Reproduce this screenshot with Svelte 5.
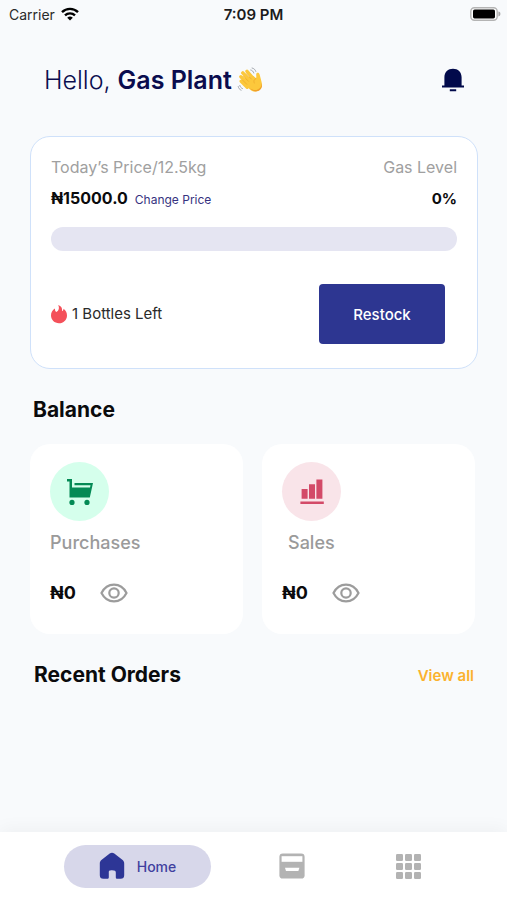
<script>
  const balances = [
    { kind: 'purchases', label: 'Purchases', amount: '₦0' },
    { kind: 'sales', label: 'Sales', amount: '₦0' }
  ];
  const gridSteps = [0, 9, 18];
  const gasLevel = 0;
</script>

<div class="screen">
  <div class="status">
    <div class="carrier">
      <span>Carrier</span>
      <svg width="18" height="14" viewBox="0 0 18 14" aria-hidden="true">
        <g fill="none" stroke="#000" stroke-width="2.4">
          <path d="M1 5.2a11.4 11.4 0 0 1 16 0" />
          <path d="M4 8.4a7.2 7.2 0 0 1 10 0" />
        </g>
        <path d="M9 13.6 6.2 10.8a4 4 0 0 1 5.6 0z" />
      </svg>
    </div>
    <span class="time">7:09 PM</span>
    <svg class="battery" width="31" height="14" viewBox="0 0 31 14" aria-hidden="true">
      <rect x=".8" y=".8" width="26.4" height="12.4" rx="3.6" fill="#fff" stroke="#b4b4b4" stroke-width="1.4" />
      <rect x="3" y="2.6" width="22" height="8.8" rx="1.6" />
      <path d="M28.4 4.6c1.4.3 2 1.2 2 2.4s-.6 2.1-2 2.4z" fill="#a8a8a8" />
    </svg>
  </div>

  <main>
    <header>
      <h1>
        <span>Hello, <b>Gas Plant</b></span>
        <svg width="26" height="26" viewBox="0 0 26 26" role="img" aria-label="Waving hand">
          <g fill="none" stroke="#fcc83c" stroke-width="3.4" stroke-linecap="round">
            <path d="m4.200 14.200 6 6M3.900 9.700l8 8M5.800 5.900l8 8.600M10 4.400l7 8" />
          </g>
          <path
            d="m8.500 10.500 8-1.500 2.600 2.300c.5-1.500 0-2.800.1-4.100.1-1.200 1-1.700 1.900-1.400 1 .3 1.500 1.300 1.800 2.600l1.600 6.400c.9 3.500.2 6.400-2.300 8.200-3 2.200-6.700 2-9.500-.8l-5-4.600z"
            fill="#fcc83c"
          />
          <path
            d="m5.600 13.100 4.200 4.200M6.500 9.300l5 5M9.300 6.700l5 5.300M18.900 11.400c-1.900 1-2.500 2.700-1.700 4.700"
            fill="none" stroke="#eba62a" stroke-width=".7" stroke-linecap="round"
          />
          <path d="M24.400 15.500c.6 3.600-1.400 6.600-4.900 7.400-2.200.5-4.400-.1-6.300-1.600 2.700 3.800 7.300 3.900 10 1.400 2-1.900 2.200-4.400 1.200-7.200z" fill="#f0a02a" />
          <path
            d="M13.700 3c1.500.3 2.700 1.500 3.100 3M15.100 1c1.900.4 3.200 1.700 3.700 3.400M2.800 18.400c.3 1.500 1.200 2.600 2.700 3.200M1.200 19.500c.3 1.800 1.300 3 2.900 3.700"
            fill="none" stroke="#9a9ea6" stroke-width=".9" stroke-linecap="round"
          />
        </svg>
      </h1>
      <button class="plain" aria-label="Notifications">
        <svg width="24" height="24" viewBox="0 0 24 24" fill="#020a4b" aria-hidden="true">
          <path d="M3.400 17.400V9.200C3.400 4.300 7 .8 12 .8s8.600 3.500 8.600 8.400v8.200H23v2H1v-2zM8.800 21.200h6.400v2H8.800z" />
        </svg>
      </button>
    </header>

    <section class="gas" aria-label="Gas stock">
      <div class="row muted"><span>Today’s Price/12.5kg</span><span>Gas Level</span></div>
      <div class="row values">
        <div class="price"><b>₦15000.0</b><a href="#price">Change Price</a></div>
        <b class="level">{gasLevel}%</b>
      </div>
      <div class="track" role="progressbar" aria-label="Gas level" aria-valuenow={gasLevel} aria-valuemin="0" aria-valuemax="100">
        <div class="fill" style="width: {gasLevel}%"></div>
      </div>
      <div class="row stock">
        <div class="bottles">
          <svg width="16" height="20" viewBox="0 0 16 20" aria-hidden="true">
            <path d="M7.200 1c3 .9 4.300 3 3.800 6.200 1-.4 1.500-1.200 1.600-2.400C14.900 6.700 16 9 16 11.400c0 4.500-3.500 7.800-8 7.800s-8-3.300-8-7.700c0-3 1.400-5.300 4-6.900-.1 1.800.3 2.900 1.400 3.500C8 6.500 8.600 3.700 7.200 1z" fill="#f4505a" />
          </svg>
          <span>1 Bottles Left</span>
        </div>
        <button class="restock">Restock</button>
      </div>
    </section>

    <h2>Balance</h2>
    <div class="balances">
      {#each balances as item}
        <article class={item.kind}>
          <div class="badge">
            {#if item.kind === 'purchases'}
              <svg width="26" height="26" viewBox="0 0 26 26" fill="#048a55" aria-hidden="true">
                <path d="M0 0h5v8.600h18l.5-2.400H7.500V4H26l-3.200 14.400H2.500V2.400H0z" />
                <circle cx="5" cy="23.400" r="2.600" />
                <circle cx="20" cy="23.400" r="2.600" />
              </svg>
            {:else}
              <svg width="24" height="26" viewBox="0 0 24 26" fill="#d34a68" aria-hidden="true">
                <path d="M1.600 10h6v9.800h-6zM9 5.200h6v14.600H9zM16.400.4h6v19.400h-6zM.4 22.400h23.400V25H.4z" />
              </svg>
            {/if}
          </div>
          <h3>{item.label}</h3>
          <div class="amount">
            <b>{item.amount}</b>
            <button class="plain" aria-label="Show {item.label}">
              <svg width="28" height="20" viewBox="0 0 28 20" fill="none" stroke="#9c9c9c" stroke-width="2.2" aria-hidden="true">
                <path d="M1.500 10C4.200 4.600 8.500 1.600 14 1.600S23.800 4.600 26.500 10C23.800 15.400 19.500 18.400 14 18.400S4.200 15.400 1.500 10z" />
                <circle cx="14" cy="10" r="4.700" />
              </svg>
            </button>
          </div>
        </article>
      {/each}
    </div>

    <div class="row orders">
      <h2>Recent Orders</h2>
      <a href="#orders">View all</a>
    </div>
  </main>

  <nav aria-label="Main">
    <a class="home" href="#home" aria-current="page">
      <svg width="26" height="28" viewBox="0 0 26 28" aria-hidden="true">
        <path d="M10.700 1.600c1.500-1.200 3.100-1.200 4.600 0l8 6.200c1.300 1 1.900 2.100 1.900 3.700v11.700c0 2.400-1.200 3.600-3.600 3.600h-3.200c-1 0-1.600-.6-1.600-1.600v-4.700c0-1.400-.8-2.300-3.800-2.300s-3.200.9-3.200 2.300v4.700c0 1-.6 1.600-1.600 1.600H4.400C2 26.800.8 25.600.8 23.200V11.500c0-1.600.6-2.700 1.900-3.700z" fill="#2d3696" />
      </svg>
      <span>Home</span>
    </a>
    <a class="tab" href="#inventory" aria-label="Inventory">
      <svg width="26" height="26" viewBox="0 0 26 26" aria-hidden="true">
        <rect x=".4" y=".4" width="25.200" height="25.200" rx="3.400" fill="#b3b3b3" />
        <path d="M2.600 3.200h20.800v5.600H2.600z" fill="#fff" />
        <path d="M6 14.800h14.400l-1 3.200H7z" fill="#fff" />
      </svg>
    </a>
    <a class="tab" href="#menu" aria-label="Menu">
      <svg width="25" height="25" viewBox="0 0 25 25" fill="#b3b3b3" aria-hidden="true">
        {#each gridSteps as y}
          {#each gridSteps as x}
            <rect {x} {y} width="7" height="7" rx="1.200" />
          {/each}
        {/each}
      </svg>
    </a>
  </nav>
</div>

<style>
  :global(body) {
    margin: 0;
  }
  .screen {
    display: flex;
    flex-direction: column;
    min-height: 100vh;
    background: #f8fafc;
    color: #0b0b0d;
    font-family: Inter, "Liberation Sans", sans-serif;
  }
  h1, h2, h3 {
    margin: 0;
  }
  a {
    text-decoration: none;
  }
  svg {
    display: block;
    flex: none;
  }
  button {
    border: 0;
    font-family: inherit;
    cursor: pointer;
  }
  .plain {
    padding: 0;
    background: none;
  }
  .row {
    display: flex;
    align-items: center;
    justify-content: space-between;
  }
  .status {
    display: grid;
    grid-template-columns: 1fr auto 1fr;
    align-items: center;
    height: 28px;
    padding: 0 6px;
    font-size: 14px;
  }
  .carrier {
    display: flex;
    align-items: center;
    gap: 6px;
    padding-left: 3px;
    color: #2a2a2a;
  }
  .time {
    font-size: 15px;
    font-weight: 600;
    color: #1c1c1c;
  }
  .battery {
    justify-self: end;
  }
  main {
    flex: 1;
    padding: 0 29px 0 30px;
  }
  header {
    display: flex;
    align-items: center;
    justify-content: space-between;
    height: 104px;
    padding: 0 13px 0 14px;
    margin-bottom: 4px;
  }
  h1 {
    display: flex;
    align-items: center;
    gap: 5px;
    font-size: 25px;
    font-weight: 300;
    color: #0a0c4e;
  }
  h1 b {
    font-weight: 600;
  }
  .gas {
    padding: 18px 20px 24px;
    border: 1px solid #cfe1fa;
    border-radius: 20px;
    background: #fff;
    line-height: 24px;
  }
  .muted {
    font-size: 16px;
    color: #a0a0a0;
  }
  .values {
    height: 24px;
    margin: 8px 0 16px;
    font-size: 16px;
  }
  .values b {
    font-weight: 700;
  }
  .values .level {
    font-size: 15px;
  }
  .price {
    display: flex;
    align-items: baseline;
    gap: 7px;
  }
  .price a {
    font-size: 12px;
    color: #36327f;
  }
  .track {
    height: 24px;
    border-radius: 12px;
    background: #e5e5f2;
    overflow: hidden;
  }
  .fill {
    height: 100%;
    background: #2d3696;
  }
  .stock {
    margin-top: 33px;
    padding-right: 12px;
  }
  .bottles {
    display: flex;
    align-items: center;
    gap: 5px;
    font-size: 15px;
    color: #2a2a2a;
  }
  .restock {
    width: 126px;
    height: 60px;
    border-radius: 4px;
    background: #2d3691;
    color: #fff;
    font-size: 15px;
    font-weight: 500;
  }
  h2 {
    font-size: 21px;
    font-weight: 700;
    line-height: 28px;
  }
  main > h2 {
    margin: 27px 3px 20px;
  }
  .balances {
    display: grid;
    grid-template-columns: 1fr 1fr;
    gap: 19px;
    margin-right: 3px;
  }
  article {
    padding: 18px 20px 29px;
    border-radius: 20px;
    background: #fff;
  }
  .badge {
    display: grid;
    place-items: center;
    width: 59px;
    height: 59px;
    border-radius: 50%;
  }
  .purchases .badge {
    background: #d5ffec;
  }
  .sales .badge {
    background: #f9e4e9;
  }
  h3 {
    margin: 10px 0 26px;
    font-size: 18px;
    font-weight: 500;
    line-height: 24px;
    color: #9a9a9a;
  }
  .sales h3 {
    padding-left: 6px;
  }
  .amount {
    display: flex;
    align-items: center;
    gap: 24px;
    font-size: 18px;
    line-height: 24px;
  }
  .orders {
    margin-top: 27px;
    padding: 0 4px;
  }
  .orders a {
    font-size: 15px;
    font-weight: 600;
    color: #fbb22e;
  }
  nav {
    display: grid;
    grid-template-columns: 170px 1fr 1fr;
    align-items: center;
    height: 68px;
    padding: 0 41px 0 64px;
    background: #fff;
    box-shadow: 0 -4px 16px rgb(0 0 0 / 4%);
  }
  .home {
    display: flex;
    align-items: center;
    justify-content: center;
    gap: 12px;
    height: 43px;
    margin-right: 23px;
    border-radius: 22px;
    background: #d7d7ea;
    color: #40409f;
    font-size: 14px;
    font-weight: 500;
  }
  .tab {
    justify-self: center;
  }
</style>
